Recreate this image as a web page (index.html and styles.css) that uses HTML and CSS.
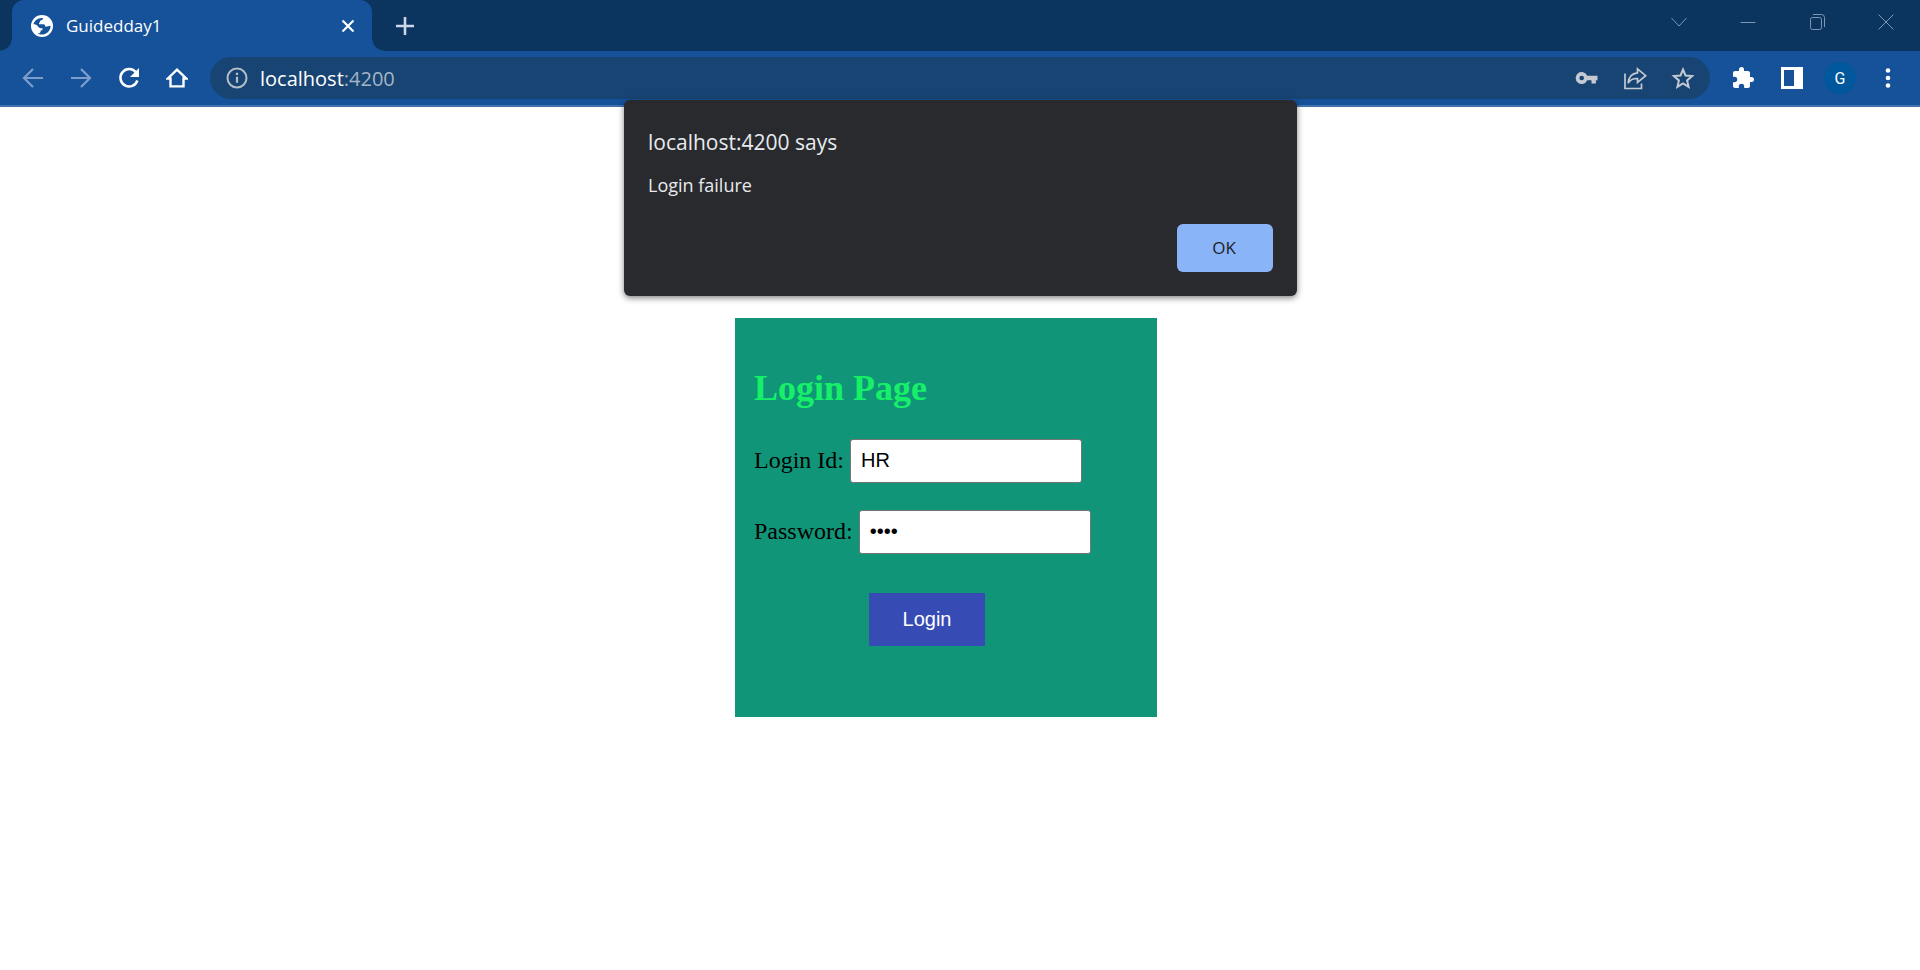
FILE: index.html
```html
<!DOCTYPE html>
<html lang="en">
<head>
<meta charset="utf-8">
<title>Guidedday1</title>
<link rel="stylesheet" href="styles.css">
</head>
<body>
<header class="browser">
  <div class="tabstrip">
    <div class="tab">
      <svg class="favicon" viewBox="0 0 22 22" width="22" height="22" aria-hidden="true">
        <circle cx="11" cy="11" r="11" fill="#fff"/>
        <path d="M2.4 9.2C3.4 5.800 6.500 3.100 10.600 2.900L12 3.100C11.900 4.600 11.100 5.500 9.200 5.800C8.900 7.300 8 7.900 8 9.300H12.400C13.800 9.300 14.300 10.200 14.400 11.700C16.200 11.900 17.100 10.900 19.600 10.800C19.500 14.800 16.800 18.300 13.200 19.300C10.500 19.900 8 19.200 6.800 18.500C9.200 18.500 9.600 17.400 9.700 15.600C11.700 15.300 11.800 14.200 11.400 13.300C8.400 13.100 7.700 12.900 7.200 11.500C5.800 9.800 4.500 9.200 2.400 9.200Z" fill="#15529a"/>
      </svg>
      <span class="tab-title">Guidedday1</span>
      <button class="icon-button tab-close" aria-label="Close tab">
        <svg viewBox="0 0 14 14" width="14" height="14"><path d="M1.500 1.500l11 11M12.500 1.500l-11 11" stroke="#fff" stroke-width="2.200" fill="none"/></svg>
      </button>
    </div>
    <button class="icon-button new-tab" aria-label="New tab">
      <svg viewBox="0 0 18 18" width="18" height="18"><path d="M9 0v18M0 9h18" stroke="#cdd8e6" stroke-width="2.600" fill="none"/></svg>
    </button>
    <div class="window-controls">
      <button class="icon-button" aria-label="Search tabs"><svg viewBox="0 0 16 16" width="16" height="16"><path d="M.5 4L8 12l7.500-8" /></svg></button>
      <button class="icon-button" aria-label="Minimize"><svg viewBox="0 0 16 16" width="16" height="16"><path d="M.5 8.500h15"/></svg></button>
      <button class="icon-button" aria-label="Restore"><svg viewBox="0 0 16 16" width="16" height="16"><rect x="1.500" y="3.500" width="11" height="12" rx="2"/><path d="M4 .5h8.500a3 3 0 0 1 3 3V13"/></svg></button>
      <button class="icon-button" aria-label="Close"><svg viewBox="0 0 16 16" width="16" height="16"><path d="M.5.5l15 15M15.500.5l-15 15"/></svg></button>
    </div>
  </div>
  <div class="toolbar">
    <div class="nav">
      <button class="icon-button" aria-label="Back"><svg viewBox="0 0 22 22" width="22" height="22"><path d="M21 11H2.500M11 2L2 11l9 9" stroke="#7f9fca" stroke-width="2.200" fill="none"/></svg></button>
      <button class="icon-button" aria-label="Forward"><svg viewBox="0 0 22 22" width="22" height="22"><path d="M1 11h18.500M11 2l9 9-9 9" stroke="#7f9fca" stroke-width="2.200" fill="none"/></svg></button>
      <button class="icon-button" aria-label="Reload"><svg viewBox="0 0 22 22" width="22" height="22"><path d="M18 5.400A8.700 8.700 0 1 0 19.400 13.500" stroke="#fff" stroke-width="2.500" fill="none"/><path d="M21 1v9h-9z" fill="#fff"/></svg></button>
      <button class="icon-button" aria-label="Home"><svg viewBox="0 0 22 22" width="22" height="22"><path d="M1.800 11.500L11 2.600l9.200 8.900H17.500v7.900h-13v-7.900z" stroke="#fff" stroke-width="2.400" fill="none"/></svg></button>
    </div>
    <div class="omnibox">
      <svg class="info" viewBox="0 0 22 22" width="22" height="22" aria-hidden="true"><circle cx="11" cy="11" r="9.500" stroke="#b4bec9" stroke-width="2" fill="none"/><path d="M11 9.800v6M11 5.800v2.300" stroke="#b4bec9" stroke-width="2.200"/></svg>
      <div class="url"><span class="host">localhost</span>:4200</div>
      <div class="omnibox-actions">
        <button class="icon-button" aria-label="Passwords"><svg viewBox="0 0 24 24" width="24" height="24"><path fill="#c3cad3" d="M12.200 9.800A6 6 0 1 0 12.200 14.200H16.500v3.400h4.400v-3.400H22.500V9.800zM6.700 14.300a2.300 2.300 0 1 1 0-4.600 2.300 2.300 0 0 1 0 4.600z"/></svg></button>
        <button class="icon-button" aria-label="Share"><svg viewBox="0 0 24 24" width="24" height="24"><path d="M2 7.500v15h16.500v-5M14.500 2.800L22.700 9.700l-8.200 6.800v-4c-4.500-.2-7.200 1-9.300 4.700C5.500 11.500 8.500 7.400 14.500 6.800z" stroke="#c3cad3" stroke-width="1.700" fill="none"/></svg></button>
        <button class="icon-button" aria-label="Bookmark"><svg viewBox="0 0 24 24" width="24" height="24"><path d="M12 3.500l2.500 6 6.600.6-5 4.300 1.500 6.400L12 17.400l-5.600 3.400 1.500-6.400-5-4.300 6.600-.6z" stroke="#c3cad3" stroke-width="2" fill="none"/></svg></button>
      </div>
    </div>
    <div class="extensions">
      <button class="icon-button" aria-label="Extensions"><svg viewBox="1 0 24 24" width="24" height="24"><path fill="#fff" d="M20.500 11H19V7c0-1.100-.9-2-2-2h-4V3.500a2.500 2.500 0 0 0-5 0V5H4c-1.100 0-1.990.9-1.990 2v3.800H3.500a2.700 2.700 0 0 1 0 5.400H2V20c0 1.100.9 2 2 2h3.800v-1.500a2.700 2.700 0 0 1 5.400 0V22H17c1.100 0 2-.9 2-2v-4h1.500a2.500 2.500 0 0 0 0-5z"/></svg></button>
      <button class="icon-button" aria-label="Side panel"><svg viewBox="0 0 24 24" width="24" height="24"><path fill="#fff" fill-rule="evenodd" d="M1 1h22v22H1zM4 4v16h10V4z"/></svg></button>
      <button class="icon-button avatar" aria-label="Profile G">G</button>
      <button class="icon-button" aria-label="Menu"><svg viewBox="0 0 24 24" width="24" height="24"><g fill="#fff"><circle cx="12" cy="4.500" r="2.300"/><circle cx="12" cy="12" r="2.300"/><circle cx="12" cy="19.500" r="2.300"/></g></svg></button>
    </div>
  </div>
  <div class="alert" role="alertdialog" aria-labelledby="alert-title" aria-describedby="alert-text">
    <h1 class="alert-title" id="alert-title">localhost:4200 says</h1>
    <p class="alert-text" id="alert-text">Login failure</p>
    <button class="alert-ok">OK</button>
  </div>
</header>
<main class="page">
  <form class="login">
    <h2 class="login-title">Login Page</h2>
    <div class="field"><label class="field-label" for="login-id">Login Id:</label><input class="field-input" id="login-id" type="text" value="HR"></div>
    <div class="field"><label class="field-label" for="password">Password:</label><input class="field-input" id="password" type="password" value="1234"></div>
    <button class="login-button" type="button">Login</button>
  </form>
</main>
</body>
</html>
```
FILE: styles.css
```css
* { box-sizing: border-box; }

body {
  margin: 0;
  background: #fff;
  font-family: "Liberation Serif", serif;
}

.browser {
  position: relative;
  font-family: "Open Sans", sans-serif;
}

.icon-button {
  display: flex;
  align-items: center;
  justify-content: center;
  flex: none;
  padding: 0;
  border: 0;
  background: none;
}

.tabstrip {
  display: flex;
  align-items: center;
  height: 51px;
  padding-left: 12px;
  background: #0b345f;
}

.tab {
  position: relative;
  display: flex;
  align-items: center;
  width: 360px;
  height: 51px;
  padding: 0 17px 0 19px;
  border-radius: 12px 12px 0 0;
  background: #15529a;
  color: #fff;
  font-size: 17px;
}

.tab::before,
.tab::after {
  content: "";
  position: absolute;
  bottom: 0;
  width: 12px;
  height: 12px;
}

.tab::before {
  right: 100%;
  background: radial-gradient(circle at 0 0, #0b345f 11px, #15529a 12px);
}

.tab::after {
  left: 100%;
  background: radial-gradient(circle at 100% 0, #0b345f 11px, #15529a 12px);
}

.tab-title { margin-left: 13px; }
.tab-close { margin-left: auto; }
.new-tab { margin-left: 24px; }

.window-controls {
  display: flex;
  gap: 53px;
  margin: 0 26px 8px auto;
}

.window-controls svg {
  fill: none;
  stroke: #7f97b3;
  stroke-width: 1;
}

.toolbar {
  display: flex;
  align-items: center;
  height: 56px;
  padding: 0 18px 0 22px;
  border-bottom: 2px solid #4273ac;
  background: #15529a;
}

.nav {
  display: flex;
  gap: 26px;
  margin-right: 22px;
}

.omnibox {
  display: flex;
  flex: 1;
  align-items: center;
  height: 42px;
  padding: 0 15px 0 16px;
  border-radius: 21px;
  background: #184473;
}

.url {
  margin-left: 12px;
  color: #a3b4c7;
  font-size: 20px;
}

.host { color: #fff; }

.omnibox-actions {
  display: flex;
  gap: 24px;
  margin-left: auto;
}

.extensions {
  display: flex;
  align-items: center;
  gap: 20px;
  margin-left: 20px;
}

.extensions .icon-button { width: 28px; }

.extensions .avatar {
  width: 32px;
  height: 32px;
  margin: 0 -2px;
  border-radius: 50%;
  background: #01579b;
  color: #fff;
  font: 16px Roboto, sans-serif;
}

.alert {
  position: absolute;
  top: 100px;
  left: 50%;
  display: flex;
  flex-direction: column;
  width: 673px;
  margin-left: -336px;
  padding: 26px 24px 24px;
  border-radius: 6px;
  background: #292a2d;
  box-shadow: 0 2px 6px rgba(0, 0, 0, 0.5);
  color: #e8eaed;
}

.alert-title {
  margin: 0 0 14px;
  font-size: 21px;
  font-weight: 400;
  line-height: 32px;
}

.alert-text {
  margin: 0 0 26px;
  font-size: 18px;
  line-height: 26px;
}

.alert-ok {
  align-self: flex-end;
  width: 96px;
  height: 48px;
  padding: 0 2px 2px 0;
  border: 0;
  border-radius: 6px;
  background: #8ab4f8;
  color: #202124;
  font: 500 17px "Open Sans", sans-serif;
}

.page {
  display: flex;
  justify-content: center;
  padding: 211px 28px 40px 0;
}

.login {
  width: 422px;
  padding: 50px 20px 71px 19px;
  background: #109578;
  color: #000;
  font-size: 24px;
}

.login-title {
  margin: 0 0 30px;
  color: #16f068;
  font-size: 36px;
  line-height: 41px;
}

.field {
  display: flex;
  align-items: center;
  gap: 6px;
  margin-bottom: 27px;
}

.field-label { padding-bottom: 2px; }

.field-input {
  width: 232px;
  height: 44px;
  padding: 0 10px 2px;
  border: 1px solid #767676;
  border-radius: 3px;
  background: #fff;
  color: #000;
  font: 20px "Liberation Sans", sans-serif;
}

.login-button {
  display: block;
  width: 116px;
  height: 53px;
  margin: 39px 0 0 115px;
  border: 0;
  background: #374bb5;
  color: #fff;
  font: 20px "Liberation Sans", sans-serif;
}
```
